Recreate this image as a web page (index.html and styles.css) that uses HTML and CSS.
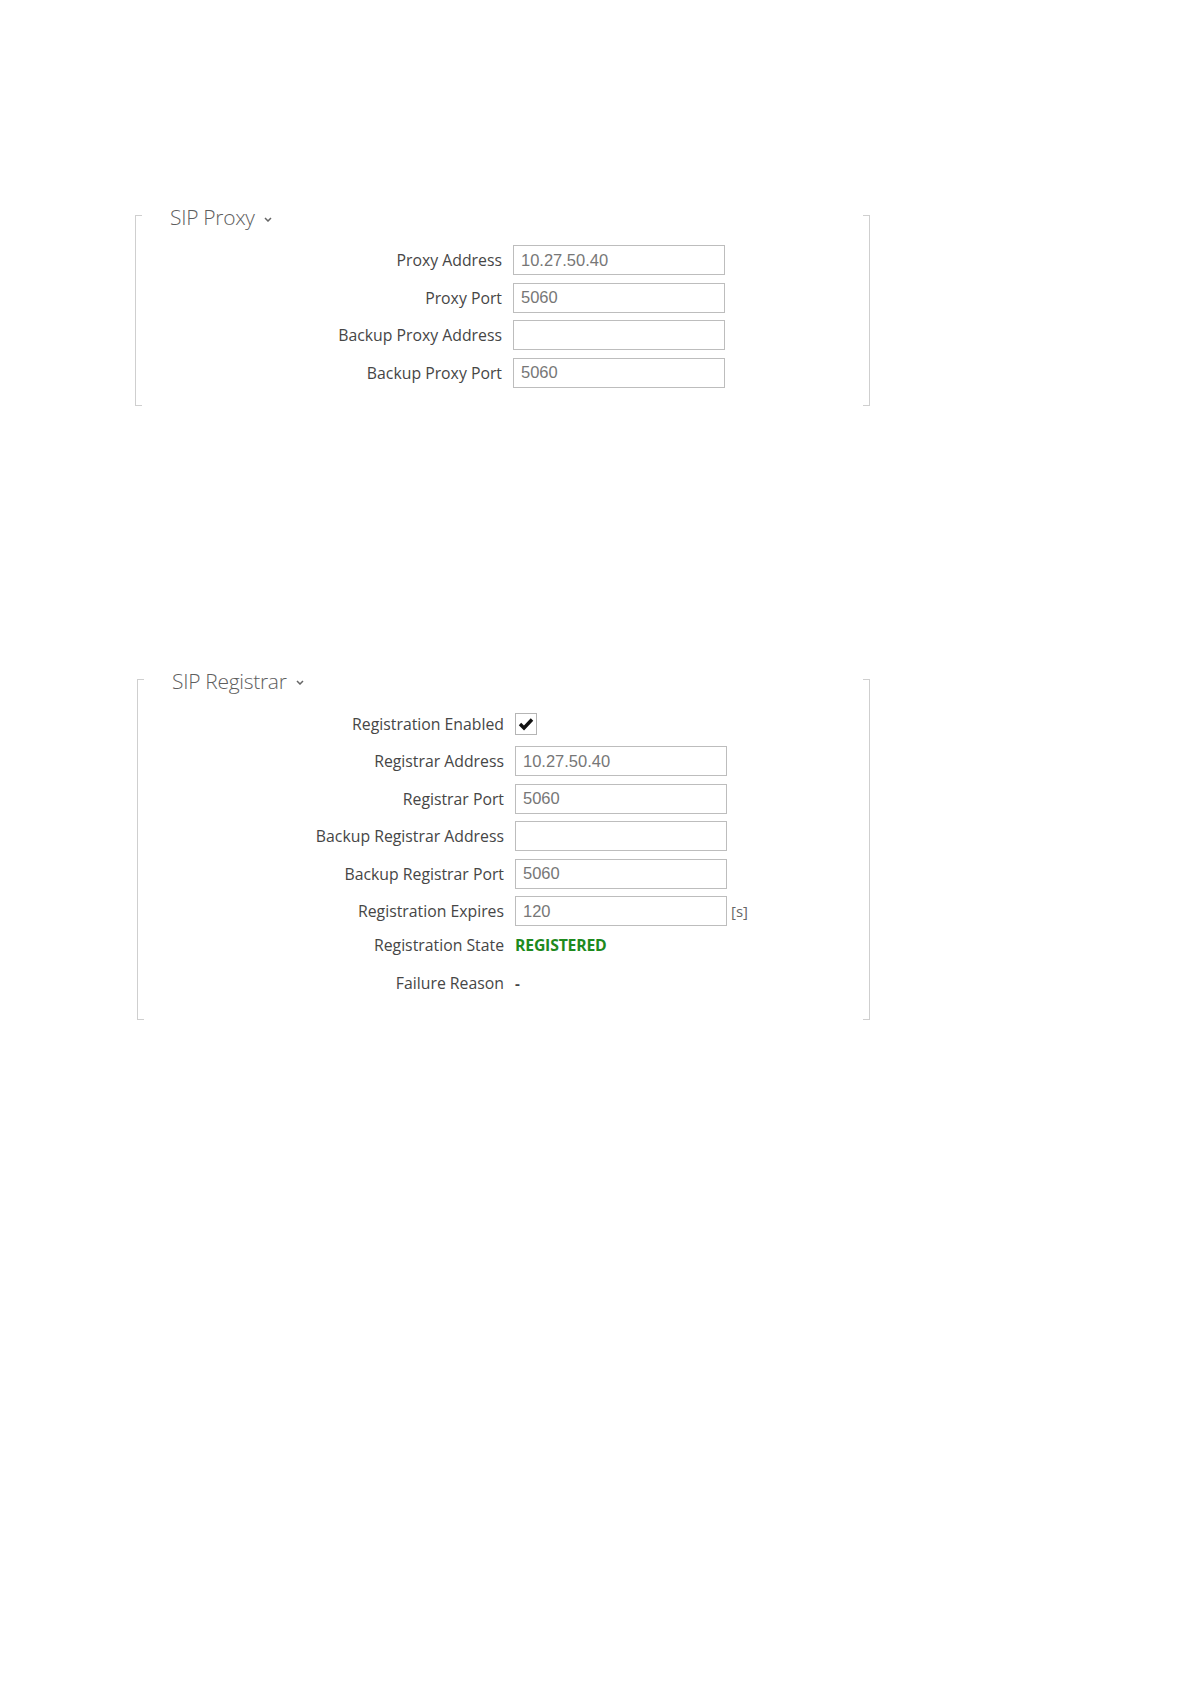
FILE: index.html
```html
<!DOCTYPE html>
<html>
<head>
  <title>SIP</title>
  <link rel="stylesheet" href="styles.css">
</head>
<body>

  <div class="page">

    <section class="panel panel-proxy">
      <h2 class="panel-title">SIP Proxy
        <svg class="chevron" width="8" height="5" viewBox="0 0 8 5"><polyline points="1,1 4,4 7,1" fill="none" stroke="#666" stroke-width="1.5"/></svg>
      </h2>

      <div class="form">
        <div class="row">
          <label for="proxy-address">Proxy Address</label>
          <input type="text" id="proxy-address" value="10.27.50.40">
        </div>
        <div class="row">
          <label for="proxy-port">Proxy Port</label>
          <input type="text" id="proxy-port" value="5060">
        </div>
        <div class="row">
          <label for="backup-proxy-address">Backup Proxy Address</label>
          <input type="text" id="backup-proxy-address" value="">
        </div>
        <div class="row">
          <label for="backup-proxy-port">Backup Proxy Port</label>
          <input type="text" id="backup-proxy-port" value="5060">
        </div>
      </div>
    </section>

    <section class="panel panel-registrar">
      <h2 class="panel-title">SIP Registrar
        <svg class="chevron" width="8" height="5" viewBox="0 0 8 5"><polyline points="1,1 4,4 7,1" fill="none" stroke="#666" stroke-width="1.5"/></svg>
      </h2>

      <div class="form">
        <div class="row">
          <label>Registration Enabled</label>
          <span class="checkbox">
            <svg width="16" height="14" viewBox="0 0 16 14"><polyline points="2,7 6,11 14,2.5" fill="none" stroke="#111" stroke-width="3.4"/></svg>
          </span>
        </div>
        <div class="row">
          <label for="registrar-address">Registrar Address</label>
          <input type="text" id="registrar-address" value="10.27.50.40">
        </div>
        <div class="row">
          <label for="registrar-port">Registrar Port</label>
          <input type="text" id="registrar-port" value="5060">
        </div>
        <div class="row">
          <label for="backup-registrar-address">Backup Registrar Address</label>
          <input type="text" id="backup-registrar-address" value="">
        </div>
        <div class="row">
          <label for="backup-registrar-port">Backup Registrar Port</label>
          <input type="text" id="backup-registrar-port" value="5060">
        </div>
        <div class="row">
          <label for="registration-expires">Registration Expires</label>
          <input type="text" id="registration-expires" value="120">
          <span class="unit">[s]</span>
        </div>
        <div class="row row-text">
          <label>Registration State</label>
          <span class="state">REGISTERED</span>
        </div>
        <div class="row row-text row-failure">
          <label>Failure Reason</label>
          <span class="value">-</span>
        </div>
      </div>
    </section>

  </div>

</body>
</html>
```

FILE: styles.css
```css
body {
  margin: 0;
  background-color: #fff;
  font-family: "Open Sans", "Noto Sans", sans-serif;
  color: #444;
}

.page {
  padding: 215px 0 0 135px;
  height: 1469px;
}

.panel {
  display: flex;
  flex-direction: column;
  width: 733px;
  border-left: 1px solid #cfcfcf;
  border-right: 1px solid #cfcfcf;
  background:
    linear-gradient(#cfcfcf, #cfcfcf) left top / 6px 1px no-repeat,
    linear-gradient(#cfcfcf, #cfcfcf) right top / 6px 1px no-repeat,
    linear-gradient(#cfcfcf, #cfcfcf) left bottom / 6px 1px no-repeat,
    linear-gradient(#cfcfcf, #cfcfcf) right bottom / 6px 1px no-repeat;
}

.panel-proxy {
  padding-bottom: 18px;
}

.panel-registrar {
  margin: 273px 0 0 2px;
  width: 731px;
  padding-bottom: 28px;
}

.panel-title {
  align-self: flex-start;
  margin: -11px 0 0 34px;
  font-size: 21px;
  font-weight: 300;
  line-height: 26px;
  letter-spacing: -0.3px;
  color: #5e5e5e;
}

.chevron {
  margin-left: 4px;
  vertical-align: middle;
}

.form {
  display: flex;
  flex-direction: column;
  gap: 7.5px;
  margin-top: 15px;
}

.row {
  display: grid;
  grid-template-columns: 366px 212px auto;
  column-gap: 11px;
  align-items: center;
  height: 30px;
}

.row label {
  text-align: right;
  font-size: 15.8px;
  color: #464646;
}

.row input {
  width: 212px;
  height: 30px;
  box-sizing: border-box;
  margin: 0;
  padding: 0 7px;
  border: 1px solid #bdbdbd;
  border-radius: 0;
  font-family: "Liberation Sans", Arial, sans-serif;
  font-size: 16.5px;
  color: #777;
  outline: none;
}

.checkbox {
  display: flex;
  align-items: center;
  justify-content: center;
  width: 22px;
  height: 22px;
  box-sizing: border-box;
  border: 1px solid #b5b5b5;
}

.unit {
  margin-left: -7px;
  font-size: 15px;
  color: #666;
}

.row-text {
  height: 20px;
}

.row-failure {
  margin-top: 10.5px;
}

.state {
  font-size: 15.8px;
  font-weight: 700;
  letter-spacing: -0.2px;
  color: #1e8a1e;
  grid-column: 2 / 4;
}

.value {
  font-size: 15px;
  font-weight: 700;
  color: #444;
}
```
